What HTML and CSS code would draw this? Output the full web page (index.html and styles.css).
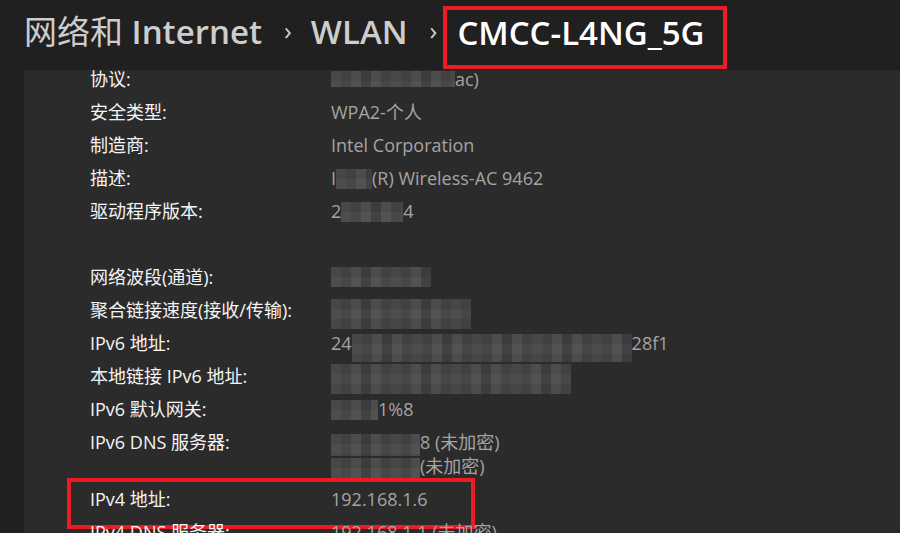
FILE: index.html
```html
<!DOCTYPE html>
<html lang="zh-CN">
<head>
<meta charset="utf-8">
<title>CMCC-L4NG_5G</title>
<link rel="stylesheet" href="styles.css">
</head>
<body>
<div class="page">
  <header class="crumbs">
    <span class="crumb"><span class="cjk">网络和</span> Internet</span>
    <span class="chev">›</span>
    <span class="crumb">WLAN</span>
    <span class="chev">›</span>
    <span class="crumb current">CMCC-L4NG_5G</span>
  </header>
  <main class="panel">
    <div class="props">
      <div class="row"><span class="k">协议:</span><span class="v"><span class="mosaic m-proto"></span>ac)</span></div>
      <div class="row"><span class="k">安全类型:</span><span class="v">WPA2-个人</span></div>
      <div class="row"><span class="k">制造商:</span><span class="v">Intel Corporation</span></div>
      <div class="row"><span class="k">描述:</span><span class="v">I<span class="mosaic m-desc"></span>(R) Wireless-AC 9462</span></div>
      <div class="row"><span class="k">驱动程序版本:</span><span class="v">2<span class="mosaic m-drv"></span>4</span></div>
      <div class="row blank"></div>
      <div class="row"><span class="k">网络波段(通道):</span><span class="v"><span class="mosaic m-band"></span></span></div>
      <div class="row"><span class="k">聚合链接速度(接收/传输):</span><span class="v"><span class="mosaic m-speed"></span></span></div>
      <div class="row"><span class="k">IPv6 地址:</span><span class="v">24<span class="mosaic m-ipv6"></span>28f1</span></div>
      <div class="row"><span class="k">本地链接 IPv6 地址:</span><span class="v"><span class="mosaic m-local"></span></span></div>
      <div class="row"><span class="k">IPv6 默认网关:</span><span class="v"><span class="mosaic m-gw"></span>1%8</span></div>
      <div class="row two"><span class="k">IPv6 DNS 服务器:</span><span class="v"><span class="line"><span class="mosaic m-dns1"></span>8 (未加密)</span><span class="line"><span class="mosaic m-dns2"></span>(未加密)</span></span></div>
      <div class="row marked"><span class="k">IPv4 地址:</span><span class="v">192.168.1.6</span></div>
      <div class="row"><span class="k">IPv4 DNS 服务器:</span><span class="v">192.168.1.1 (未加密)</span></div>
    </div>
  </main>
</div>
</body>
</html>
```

FILE: styles.css
```css
* { box-sizing: border-box; }
html, body { margin: 0; padding: 0; }
body {
  background: #202020;
  width: 900px;
  height: 533px;
  overflow: hidden;
  font-family: "Open Sans", "Noto Sans CJK SC", sans-serif;
}
.page {
  display: flex;
  flex-direction: column;
  height: 533px;
}
.crumbs {
  height: 70px;
  flex: none;
  display: flex;
  align-items: flex-start;
  padding-left: 24px;
  color: #cdcdcd;
  font-size: 33px;
  font-weight: 600;
  white-space: nowrap;
}
.crumb {
  line-height: 40px;
  margin-top: 12px;
}
.crumbs .cjk { font-weight: 400; }
.chev {
  font-size: 26px;
  font-weight: 400;
  line-height: 40px;
  margin: 10px 19px 0 22px;
  color: #cfcfcf;
}
.crumb.current {
  color: #ffffff;
  border: 4px solid #ed1c24;
  height: 63px;
  margin-top: 6px;
  padding: 3px 18px 0 10px;
  margin-left: -13px;
}
.panel {
  flex: 1;
  margin-left: 24px;
  background: #2b2b2b;
  overflow: hidden;
}
.props {
  margin-top: -7px;
  font-size: 18px;
  line-height: 24px;
}
.row {
  display: grid;
  grid-template-columns: 241px 1fr;
  padding: 4px 0 5px 66px;
  height: 33px;
  position: relative;
  white-space: nowrap;
}
.row.two { height: 57px; }
.k { color: #f4f4f4; }
.v {
  color: #a4a4a4;
  display: block;
}
.line { display: block; height: 24px; }
.marked::after {
  content: "";
  position: absolute;
  left: 43px;
  top: -5px;
  width: 400px;
  height: 43px;
  border: 4px solid #ed1c24;
}
.mosaic {
  display: inline-block;
  vertical-align: middle;
  height: 20px;
  margin: -2px 0 0;
  background-color: #474747;
  background-image:
    linear-gradient(90deg, rgba(255,255,255,.06) 50%, transparent 50%),
    linear-gradient(90deg, rgba(0,0,0,.07) 33%, transparent 33%),
    linear-gradient(rgba(0,0,0,.08) 50%, transparent 50%);
  background-size: 20px 100%, 30px 100%, 100% 20px;
}
.m-proto { width: 124px; height: 16px; margin: -6px 0 -2px; }
.m-desc { width: 36px; }
.m-drv { width: 62px; }
.m-band { width: 100px; margin: -6px 0 -2px; }
.m-speed { width: 140px; height: 30px; margin: -4px 0 -8px; }
.m-ipv6 { width: 280px; height: 28px; margin: -2px 0 -8px; }
.m-local { width: 240px; height: 30px; margin: -5px 0 -7px; }
.m-gw { width: 47px; }
.m-dns1 { width: 89px; height: 22px; margin: -2px 0 -4px; }
.m-dns2 { width: 89px; height: 22px; margin: -2px 0 -4px; }
```
